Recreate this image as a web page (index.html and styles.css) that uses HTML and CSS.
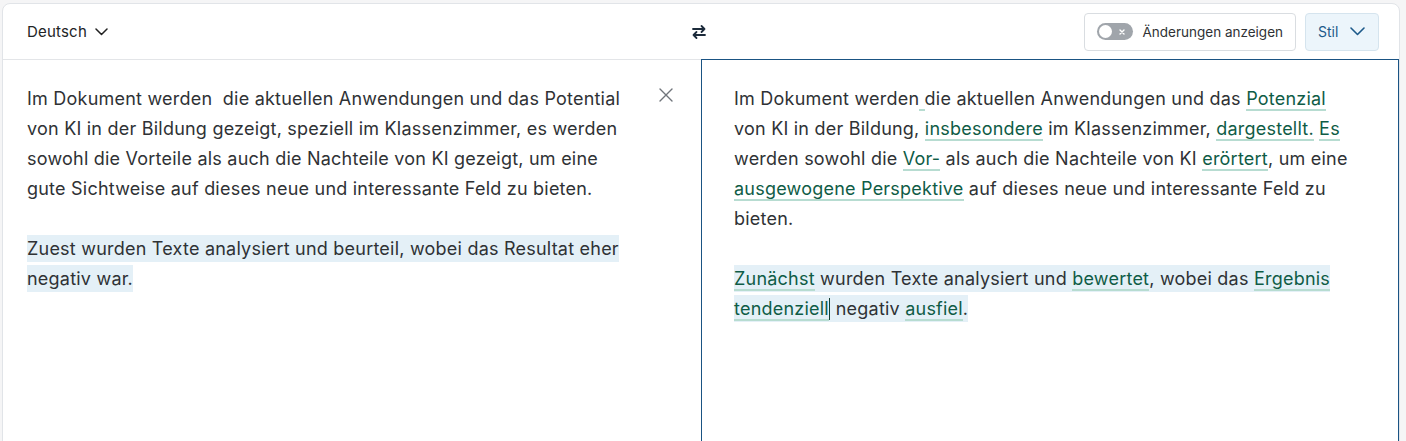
FILE: index.html
```html
<!DOCTYPE html>
<html lang="de">
<head>
<meta charset="utf-8">
<title>Stil</title>
<link rel="stylesheet" href="styles.css">
</head>
<body>
<div class="card">
  <header class="toolbar">
    <div class="lang">
      <span>Deutsch</span>
      <svg class="chev" width="13" height="8" viewBox="0 0 13 8"><path d="M1 1l5.5 5.5L12 1" fill="none" stroke="#222" stroke-width="1.5" stroke-linecap="round" stroke-linejoin="round"/></svg>
    </div>
    <button class="swap" aria-label="Tauschen">
      <svg width="16" height="16" viewBox="0 0 16 16"><path d="M2 5h11.5M10.5 2l3 3-3 3M14 11H2.5M5.5 8l-3 3 3 3" fill="none" stroke="#1c2b3b" stroke-width="1.8" stroke-linecap="round" stroke-linejoin="round"/></svg>
    </button>
    <div class="actions">
      <button class="toggle-btn">
        <span class="switch"><span class="knob"></span><svg class="switch-x" width="6" height="6" viewBox="0 0 6 6"><path d="M1 1l4 4M5 1L1 5" stroke="#fff" stroke-width="1.4" stroke-linecap="round"/></svg></span>
        <span>Änderungen anzeigen</span>
      </button>
      <button class="style-btn">
        <span>Stil</span>
        <svg width="15" height="9" viewBox="0 0 15 9"><path d="M1 1l6.5 6.5L14 1" fill="none" stroke="#1d5a8a" stroke-width="1.6" stroke-linecap="round" stroke-linejoin="round"/></svg>
      </button>
    </div>
  </header>
  <div class="panes">
    <section class="pane source">
      <button class="clear" aria-label="Löschen">
        <svg width="14" height="14" viewBox="0 0 14 14"><path d="M1 1l12 12M13 1L1 13" stroke="#70757b" stroke-width="1.4" stroke-linecap="round"/></svg>
      </button>
      <p>Im Dokument werden&nbsp; die aktuellen Anwendungen und das Potential von KI in der Bildung gezeigt, speziell im Klassenzimmer, es werden sowohl die Vorteile als auch die Nachteile von KI gezeigt, um eine gute Sichtweise auf dieses neue und interessante Feld zu bieten.</p>
      <p><span class="hl">Zuest wurden Texte analysiert und beurteil, wobei das Resultat eher negativ war.</span></p>
    </section>
    <section class="pane target">
      <p>Im Dokument werden<span class="chg gap"> </span>die aktuellen Anwendungen und das <span class="chg">Potenzial</span> von KI in der Bildung, <span class="chg">insbesondere</span> im Klassenzimmer, <span class="chg">dargestellt.</span> <span class="chg">Es</span> werden sowohl die <span class="chg">Vor-</span> als auch die Nachteile von KI <span class="chg">erörtert</span>, um eine <span class="chg">ausgewogene Perspektive</span> auf dieses neue und interessante Feld zu bieten.</p>
      <p><span class="hl"><span class="chg">Zunächst</span> wurden Texte analysiert und <span class="chg">bewertet</span>, wobei das <span class="chg">Ergebnis</span> <span class="chg">tendenziell</span><span class="caret"></span> negativ <span class="chg">ausfiel</span>.</span></p>
    </section>
  </div>
</div>
</body>
</html>
```

FILE: styles.css
```css
* { box-sizing: border-box; }

html, body {
  margin: 0;
  height: 100%;
}

body {
  background: #f5f5f6;
  padding: 3px 6px 0 2px;
  font-family: Inter, "Noto Sans", "Liberation Sans", sans-serif;
  color: #2f3235;
  overflow: hidden;
}

.card {
  background: #fff;
  border: 1px solid #e1e4e8;
  border-radius: 8px;
  min-height: 520px;
  display: flex;
  flex-direction: column;
}

.toolbar {
  height: 56px;
  border-bottom: 1px solid #e3e5e8;
  display: grid;
  grid-template-columns: 1fr auto 1fr;
  align-items: center;
  padding: 0 20px 0 24px;
}

.lang {
  display: flex;
  align-items: center;
  gap: 8px;
  font-size: 15px;
  letter-spacing: 0.2px;
  color: #222426;
}

.chev { margin-top: 1px; }

.swap {
  border: 0;
  background: none;
  padding: 0;
  margin-right: 9px;
  display: flex;
  align-items: center;
  justify-content: center;
  width: 18px;
  height: 18px;
}

.actions {
  display: flex;
  justify-content: flex-end;
  align-items: center;
  gap: 9px;
}

button {
  font-family: inherit;
  cursor: pointer;
}

.toggle-btn {
  height: 38px;
  display: flex;
  align-items: center;
  gap: 10px;
  padding: 0 12px 0 12px;
  background: #fff;
  border: 1px solid #d9dde1;
  border-radius: 4px;
  font-size: 13.5px;
  color: #2f3235;
}

.switch {
  width: 36px;
  height: 17px;
  border-radius: 9px;
  background: #a0a5ab;
  display: flex;
  align-items: center;
  justify-content: space-between;
  padding: 0 8px 0 2px;
}

.knob {
  width: 13px;
  height: 13px;
  border-radius: 50%;
  background: #fff;
}

.style-btn {
  height: 38px;
  width: 74px;
  display: flex;
  align-items: center;
  gap: 12px;
  padding: 0 12px;
  background: #ecf5fb;
  border: 1px solid #d5e4ee;
  border-radius: 4px;
  font-size: 14px;
  color: #1d5a8a;
}

.panes {
  flex: 1;
  display: grid;
  grid-template-columns: 698px 698px;
}

.pane {
  font-size: 18px;
  letter-spacing: 0.22px;
  line-height: 30px;
}

.pane p { margin: 0 0 30px; }

.source {
  position: relative;
  padding: 24px 73px 0 24px;
}

.clear {
  position: absolute;
  top: 28px;
  right: 28px;
  border: 0;
  background: none;
  padding: 0;
  width: 14px;
  height: 14px;
  display: flex;
}

.target {
  margin-top: -1px;
  border: 1px solid #1a5383;
  padding: 24px 47px 0 32px;
}

.hl {
  background: #e4f0f7;
  padding: 3px 0;
}

.chg {
  color: #0f5c46;
  border-bottom: 2px solid #b7dcd1;
}

.caret {
  display: inline-block;
  width: 1.5px;
  height: 22px;
  background: #123f32;
  vertical-align: -5px;
}
```
